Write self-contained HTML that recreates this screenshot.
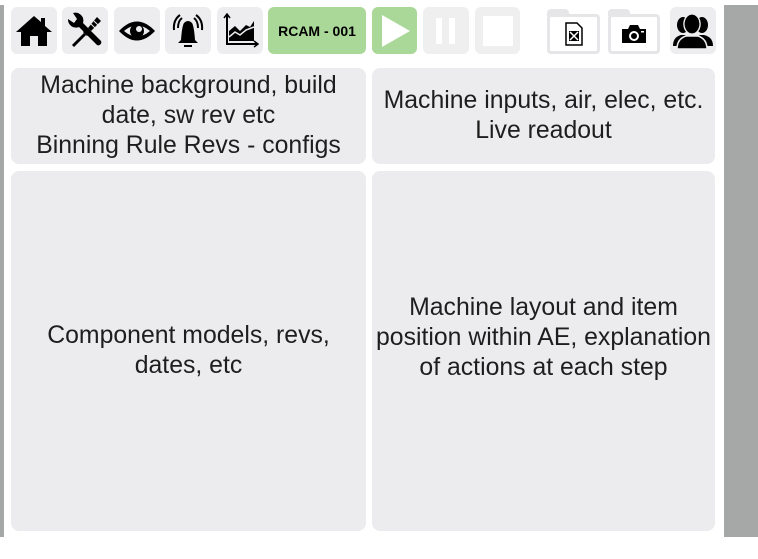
<!DOCTYPE html>
<html><head><meta charset="utf-8"><style>
*{margin:0;padding:0;box-sizing:border-box}
body{width:758px;height:559px;background:#fff;position:relative;overflow:hidden;font-family:"Liberation Sans",sans-serif}
.a{position:absolute}
.btn{position:absolute;top:7px;height:47px;background:#ededef;border-radius:6px;display:flex;align-items:center;justify-content:center}
.panel{position:absolute;background:#ececee;border-radius:8px;display:flex;align-items:center;justify-content:center;text-align:center;font-size:24.8px;line-height:30px;color:#1e1e1e}
.fold{position:absolute;top:14px;height:40px;width:53px;border:3px solid #e6e6e8;border-radius:4px;background:#fff;display:flex;align-items:center;justify-content:center}
.tab{position:absolute;top:9px;width:22px;height:7px;background:#e6e6e8;border-radius:4px 4px 0 0}
</style></head><body>
<div class="a" style="left:0;top:5px;width:4px;height:532px;background:#a5a8a7"></div>
<div class="a" style="left:724px;top:5px;width:34px;height:532px;background:#a5a8a7"></div>

<div class="btn" style="left:11px;width:46px"><svg width="40" height="34" viewBox="0 0 40 34"><path d="M20 2 L2 18 L7 18 L7 32 L16 32 L16 22 L24 22 L24 32 L33 32 L33 18 L38 18 L31 12 L31 4 L27 4 L27 8 Z" fill="#000"/></svg></div>
<div class="btn" style="left:62px;width:46px"><svg width="40" height="40" viewBox="0 0 40 40">
<path d="M8 35 L20 23" stroke="#000" stroke-width="3"/>
<path d="M18 21 L22 25 L26 21 L22 17Z" fill="#000"/>
<path d="M23 17 L32 6 L36 10 L26 20Z" fill="#000"/>
<path d="M26 13 L30 17 M29 10 L33 14" stroke="#ededef" stroke-width="1"/>
<path d="M14 16 L32 34 A3 3 0 0 0 36 30 L18 12 A8 8 0 0 0 8 2 L12 8 L9 12 L3 8 A8 8 0 0 0 14 16Z" fill="#000"/>
</svg></div>
<div class="btn" style="left:114px;width:46px"><svg width="40" height="26" viewBox="0 0 40 26"><path d="M2 13 Q20 -6 38 13 Q20 32 2 13Z" fill="#000"/><path d="M7 13 Q20 2 33 13 Q20 24 7 13Z" fill="#ededef"/><circle cx="20" cy="13" r="7" fill="#000"/><circle cx="22" cy="11" r="3" fill="#ededef"/></svg></div>
<div class="btn" style="left:165px;width:46px"><svg width="36" height="38" viewBox="0 0 36 38"><path d="M11 28 Q12 14 14 11 Q18 7 22 11 Q24 14 25 28 L28 31 L8 31 Z" fill="#000"/><rect x="14" y="33" width="8" height="2" fill="#000"/><path d="M8 16 Q8 9 12 6 M4 18 Q3 8 10 3 M28 16 Q28 9 24 6 M32 18 Q33 8 26 3" stroke="#000" stroke-width="2" fill="none"/></svg></div>
<div class="btn" style="left:217px;width:46px"><svg width="38" height="36" viewBox="0 0 38 36"><path d="M6 2 L6 31 L36 31" stroke="#000" stroke-width="2" fill="none"/><path d="M3 5 L6 1 L9 5 M33 28 L37 31 L33 34" stroke="#000" stroke-width="1.5" fill="none"/><path d="M8 26 L8 18 L14 13 L19 18 L25 12 L29 14 L33 8 L33 28 L8 28Z" fill="#000"/><path d="M8 24 L14 19 L19 22 L25 17 L33 14" stroke="#ededef" stroke-width="1.5" fill="none"/></svg></div>
<div class="btn" style="left:268px;width:98px;background:#aad898;font-weight:bold;font-size:14px;color:#000">RCAM - 001</div>

<div class="btn" style="left:372px;width:45px;background:#aad898"><svg width="34" height="36" viewBox="0 0 34 36"><path d="M4 2 L32 18 L4 34Z" fill="#fff"/></svg></div>
<div class="btn" style="left:423px;width:46px;background:#efefef"><svg width="24" height="30"><rect x="2" y="2" width="6" height="26" fill="#fff"/><rect x="15" y="2" width="6" height="26" fill="#fff"/></svg></div>
<div class="btn" style="left:475px;width:45px;background:#efefef"><div style="width:30px;height:30px;background:#fff"></div></div>

<div class="tab" style="left:547px"></div>
<div class="fold" style="left:547px"><svg width="20" height="24" viewBox="0 0 20 24"><path d="M2 1 L13 1 L18 6 L18 23 L2 23Z" fill="#fff" stroke="#000" stroke-width="1.5"/><path d="M5 9 L15 9 L15 19 L5 19Z" fill="#000"/><path d="M6 10 L14 18 M14 10 L6 18" stroke="#fff" stroke-width="1.5"/></svg></div>
<div class="tab" style="left:608px"></div>
<div class="fold" style="left:608px;width:52px"><svg width="26" height="20" viewBox="0 0 26 20"><path d="M1 5 L7 5 L9 1 L17 1 L19 5 L25 5 L25 19 L1 19Z" fill="#000"/><circle cx="13" cy="12" r="5" fill="#fff"/><circle cx="13" cy="12" r="3" fill="#000"/><rect x="20" y="7" width="3" height="1.5" fill="#fff"/></svg></div>
<div class="btn" style="left:670px;width:46px"><svg width="42" height="36" viewBox="0 0 42 36">
<ellipse cx="11" cy="12" rx="6" ry="8" fill="#000"/>
<path d="M1 33 Q1 24 9 22 L13 22 Q18 24 18 33Z" fill="#000"/>
<ellipse cx="30" cy="12" rx="6" ry="8" fill="#000"/>
<path d="M23 33 Q23 24 28 22 L32 22 Q41 24 41 33Z" fill="#000"/>
<ellipse cx="20" cy="11" rx="8" ry="10" fill="#000" stroke="#ededef" stroke-width="1.5"/>
<path d="M5 36 Q5 26 14 23 L26 23 Q35 26 35 36Z" fill="#000" stroke="#ededef" stroke-width="1.5"/>
<ellipse cx="20" cy="11" rx="7.3" ry="9.3" fill="#000"/>
</svg></div>

<div class="panel" style="left:11px;top:68px;width:355px;height:96px">Machine background, build<br>date, sw rev etc<br>Binning Rule Revs - configs</div>
<div class="panel" style="left:372px;top:68px;width:343px;height:96px">Machine inputs, air, elec, etc.<br>Live readout</div>
<div class="panel" style="left:11px;top:171px;width:355px;height:360px">Component models, revs,<br>dates, etc</div>
<div class="panel" style="left:372px;top:171px;width:343px;height:360px;padding-bottom:26px">Machine layout and item<br>position within AE, explanation<br>of actions at each step</div>
</body></html>
